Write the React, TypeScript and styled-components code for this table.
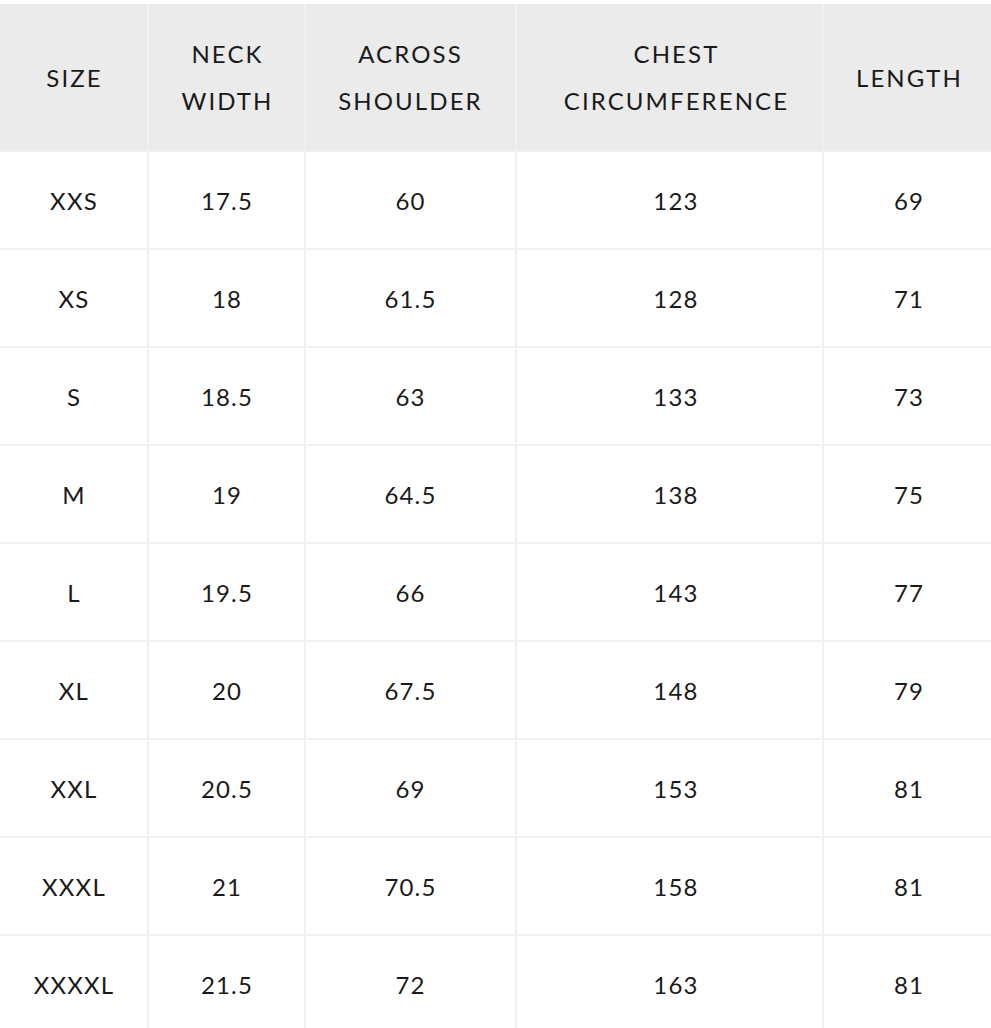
import React from "react";
import styled, { createGlobalStyle } from "styled-components";

const Global = createGlobalStyle`
  html, body { margin: 0; padding: 0; background: #ffffff; }
  body { font-family: Lato, "Open Sans", sans-serif; color: #1a1a1a; }
`;

const Page = styled.div`
  padding-top: 4px;
  width: 991px;
  height: 1028px;
  overflow: hidden;
  box-sizing: border-box;
`;

const Table = styled.div`
  display: grid;
  grid-template-columns: 147px 155px 209px 305px 167px;
  grid-auto-rows: 96px;
  grid-template-rows: 146px;
  gap: 2px;
  background: #f1f1f1;
`;

const HeadCell = styled.div<{ $indent?: number }>`
  background: #ebebeb;
  display: flex;
  align-items: center;
  justify-content: center;
  text-align: center;
  font-size: 24px;
  line-height: 47px;
  letter-spacing: 2.1px;
  padding-left: ${(p) => (p.$indent ?? 0) + 2}px;
`;

const Cell = styled.div<{ $indent?: number }>`
  background: #ffffff;
  display: flex;
  align-items: center;
  justify-content: center;
  font-size: 24px;
  letter-spacing: 1.2px;
  padding-left: ${(p) => (p.$indent ?? 0) + 1}px;
`;

const headers: string[][] = [
  ["SIZE"],
  ["NECK", "WIDTH"],
  ["ACROSS", "SHOULDER"],
  ["CHEST", "CIRCUMFERENCE"],
  ["LENGTH"],
];

const indents = [0, 0, -2, 12, 2];

const rows: string[][] = [
  ["XXS", "17.5", "60", "123", "69"],
  ["XS", "18", "61.5", "128", "71"],
  ["S", "18.5", "63", "133", "73"],
  ["M", "19", "64.5", "138", "75"],
  ["L", "19.5", "66", "143", "77"],
  ["XL", "20", "67.5", "148", "79"],
  ["XXL", "20.5", "69", "153", "81"],
  ["XXXL", "21", "70.5", "158", "81"],
  ["XXXXL", "21.5", "72", "163", "81"],
];

export default function App() {
  return (
    <Page>
      <Global />
      <Table>
        {headers.map((h, i) => (
          <HeadCell key={i} $indent={indents[i]}>
            <div>
              {h.map((line, j) => (
                <div key={j}>{line}</div>
              ))}
            </div>
          </HeadCell>
        ))}
        {rows.map((r, i) =>
          r.map((v, j) => (
            <Cell key={`${i}-${j}`} $indent={indents[j]}>
              {v}
            </Cell>
          ))
        )}
      </Table>
    </Page>
  );
}
